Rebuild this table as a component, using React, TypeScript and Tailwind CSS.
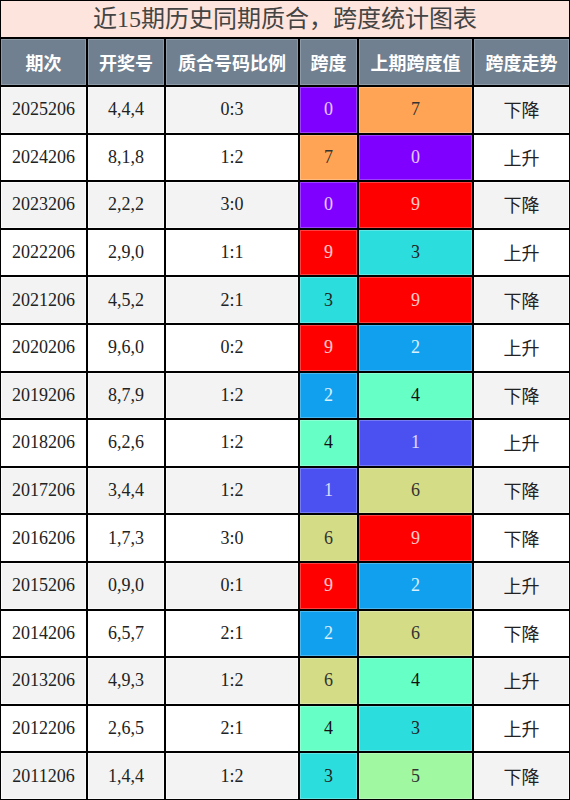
import React from "react";

const rows = [
  ["2025206", "4,4,4", "0:3", 0, 7, "下降"],
  ["2024206", "8,1,8", "1:2", 7, 0, "上升"],
  ["2023206", "2,2,2", "3:0", 0, 9, "下降"],
  ["2022206", "2,9,0", "1:1", 9, 3, "上升"],
  ["2021206", "4,5,2", "2:1", 3, 9, "下降"],
  ["2020206", "9,6,0", "0:2", 9, 2, "上升"],
  ["2019206", "8,7,9", "1:2", 2, 4, "下降"],
  ["2018206", "6,2,6", "1:2", 4, 1, "上升"],
  ["2017206", "3,4,4", "1:2", 1, 6, "下降"],
  ["2016206", "1,7,3", "3:0", 6, 9, "下降"],
  ["2015206", "0,9,0", "0:1", 9, 2, "上升"],
  ["2014206", "6,5,7", "2:1", 2, 6, "下降"],
  ["2013206", "4,9,3", "1:2", 6, 4, "上升"],
  ["2012206", "2,6,5", "2:1", 4, 3, "上升"],
  ["2011206", "1,4,4", "1:2", 3, 5, "下降"],
] as const;

// span value -> cell colour
const spanColor: Record<number, string> = {
  0: "bg-[#8000ff] text-white/80",
  1: "bg-[#4b50f0] text-white/80",
  2: "bg-[#10a0ee] text-white/85",
  3: "bg-[#2cdddd] text-[#222]",
  4: "bg-[#66ffc6] text-[#111]",
  5: "bg-[#a0f8a0] text-[#333]",
  6: "bg-[#d5dc86] text-[#333]",
  7: "bg-[#ffa354] text-[#333]",
  9: "bg-[#ff0000] text-white/80",
};

const headers = ["期次", "开奖号", "质合号码比例", "跨度", "上期跨度值", "跨度走势"];

const serif = "font-['Liberation_Serif','Noto_Sans_CJK_SC',serif]";
const cjk = "font-['Noto_Sans_CJK_SC',sans-serif]";

export default function App() {
  return (
    <div className="w-[570px] h-[800px] bg-black p-px grid grid-cols-[85px_76px_132px_57px_113px_1fr] grid-rows-[36px_46px_repeat(15,1fr)] gap-[2px]">
      {/* Title */}
      <div
        className={`col-span-6 bg-[#fde4dc] flex items-center justify-center text-[24px] text-[#444] ${serif}`}
      >
        近15期历史同期质合，跨度统计图表
      </div>

      {/* Header */}
      {headers.map((h) => (
        <div
          key={h}
          className={`bg-[#708090] border border-white/20 flex items-center justify-center text-white font-bold text-[18px] ${cjk}`}
        >
          {h}
        </div>
      ))}

      {/* Rows */}
      {rows.map((r, i) => {
        const stripe = i % 2 === 0 ? "bg-[#f3f3f3]" : "bg-white";
        const plain = `${stripe} border border-white/60 flex items-center justify-center text-[18px] text-[#222]`;
        return (
          <React.Fragment key={r[0]}>
            <div className={`${plain} ${serif}`}>{r[0]}</div>
            <div className={`${plain} ${serif}`}>{r[1]}</div>
            <div className={`${plain} ${serif}`}>{r[2]}</div>
            <div
              className={`${spanColor[r[3]]} border border-white/25 flex items-center justify-center text-[18px] ${serif}`}
            >
              {r[3]}
            </div>
            <div
              className={`${spanColor[r[4]]} border border-white/25 flex items-center justify-center text-[18px] ${serif}`}
            >
              {r[4]}
            </div>
            <div className={`${plain} ${cjk}`}>{r[5]}</div>
          </React.Fragment>
        );
      })}
    </div>
  );
}
